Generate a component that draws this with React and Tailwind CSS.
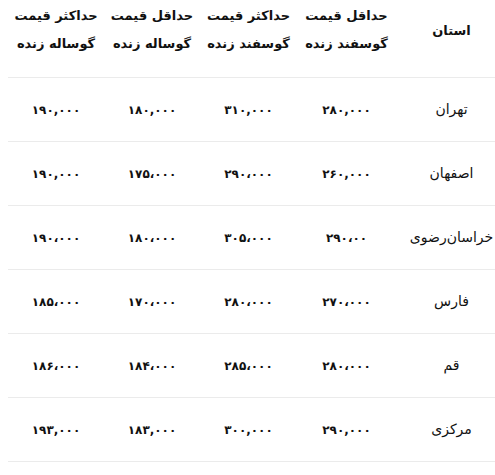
const rows = [
  { city: "تهران", v: ["۲۸۰,۰۰۰", "۳۱۰,۰۰۰", "۱۸۰,۰۰۰", "۱۹۰,۰۰۰"] },
  { city: "اصفهان", v: ["۲۶۰,۰۰۰", "۲۹۰،۰۰۰", "۱۷۵،۰۰۰", "۱۹۰,۰۰۰"] },
  { city: "خراسان‌رضوی", v: ["۲۹۰،۰۰", "۳۰۵،۰۰۰", "۱۸۰،۰۰۰", "۱۹۰،۰۰۰"] },
  { city: "فارس", v: ["۲۷۰،۰۰۰", "۲۸۰،۰۰۰", "۱۷۰،۰۰۰", "۱۸۵،۰۰۰"] },
  { city: "قم", v: ["۲۸۰،۰۰۰", "۲۸۵،۰۰۰", "۱۸۴،۰۰۰", "۱۸۶،۰۰۰"] },
  { city: "مرکزی", v: ["۲۹۰,۰۰۰", "۳۰۰,۰۰۰", "۱۸۳,۰۰۰", "۱۹۳,۰۰۰"] },
];

const headers = [
  ["حداقل قیمت", "گوسفند زنده"],
  ["حداکثر قیمت", "گوسفند زنده"],
  ["حداقل قیمت", "گوساله زنده"],
  ["حداکثر قیمت", "گوساله زنده"],
];

const grid = "grid grid-cols-[1fr_99px_97px_96px_96px] border-b border-[#ebebeb]";

export default function App() {
  return (
    <div
      dir="rtl"
      className="w-[495px] h-[475px] bg-white pl-[8px] text-[#111]"
      style={{ fontFamily: '"DejaVu Sans", Tahoma, sans-serif' }}
    >
      {/* header */}
      <div className={`${grid} h-[78px]`}>
        <div className="flex items-center justify-center pb-[16px] pl-[12px] text-[13px] font-bold">
          استان
        </div>
        {headers.map((h, i) => (
          <div
            key={i}
            className="flex flex-col items-center pt-[2px] text-[13px] font-bold leading-[28px]"
          >
            <span>{h[0]}</span>
            <span>{h[1]}</span>
          </div>
        ))}
      </div>

      {rows.map((r) => (
        <div key={r.city} className={`${grid} h-[64px]`}>
          <div className="flex items-center justify-center pl-[12px] text-[14px]">
            {r.city}
          </div>
          {r.v.map((n, i) => (
            <div key={i} className="flex items-center justify-center text-[12px] font-bold">
              {n}
            </div>
          ))}
        </div>
      ))}
    </div>
  );
}
